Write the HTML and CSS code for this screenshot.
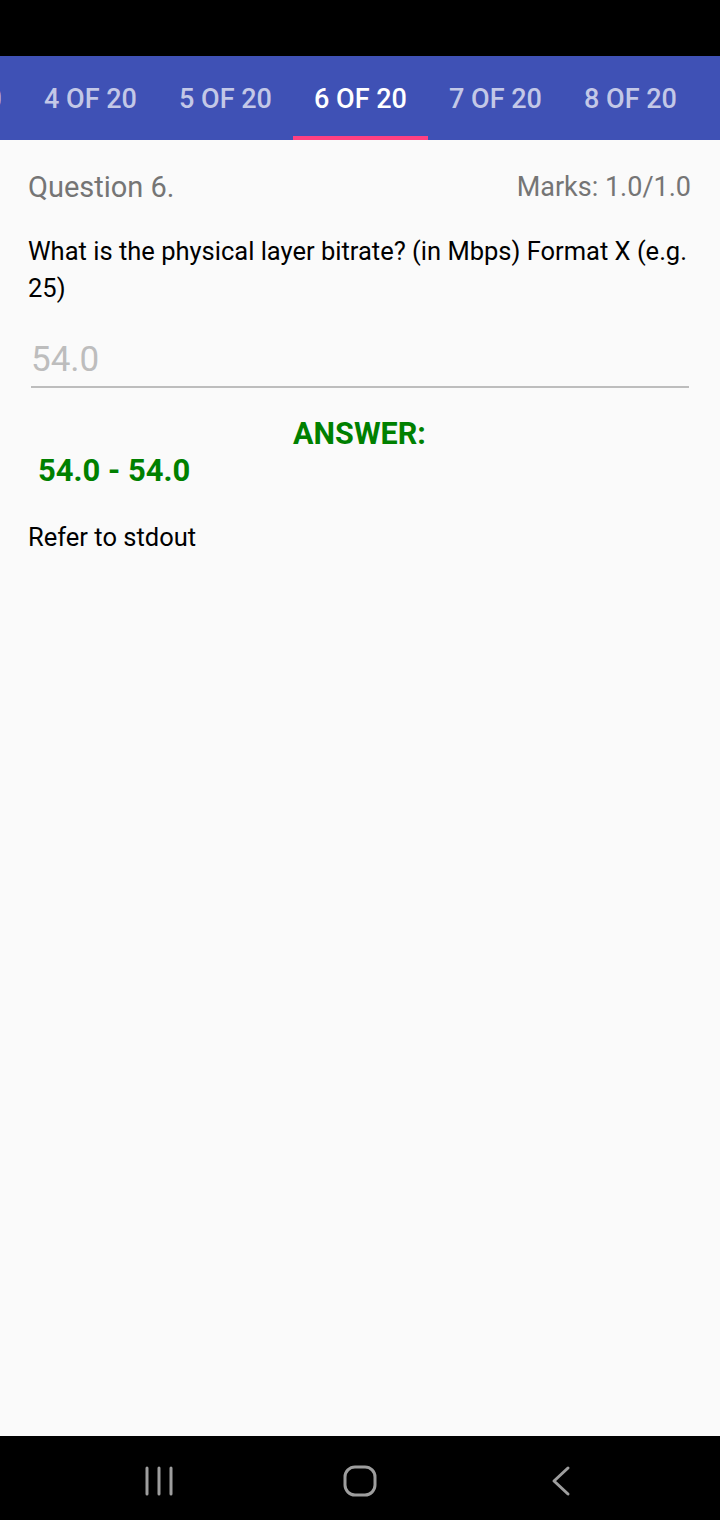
FILE: index.html
```html
<!DOCTYPE html>
<html>
<head>
<meta charset="utf-8">
<link rel="stylesheet" href="styles.css">
</head>
<body>
<div class="screen">
  <div class="status"></div>
  <div class="tabs">
    <div class="tab-strip">
      <div class="tab">3 OF 20</div>
      <div class="tab">4 OF 20</div>
      <div class="tab">5 OF 20</div>
      <div class="tab active">6 OF 20</div>
      <div class="tab">7 OF 20</div>
      <div class="tab">8 OF 20</div>
    </div>
  </div>
  <main class="content">
    <div class="head-row">
      <span class="qnum">Question 6.</span>
      <span class="marks">Marks: 1.0/1.0</span>
    </div>
    <p class="question">What is the physical layer bitrate? (in Mbps) Format X (e.g. 25)</p>
    <div class="field">54.0</div>
    <div class="answer-label">ANSWER:</div>
    <div class="answer-value">54.0 - 54.0</div>
    <p class="feedback">Refer to stdout</p>
  </main>
  <nav class="navbar">
    <svg class="nav-icon" width="40" height="40" viewBox="0 0 40 40"><g stroke="#9e9e9e" stroke-width="3" stroke-linecap="round"><line x1="8" y1="7" x2="8" y2="33"/><line x1="20" y1="7" x2="20" y2="33"/><line x1="32" y1="7" x2="32" y2="33"/></g></svg>
    <svg class="nav-icon" width="40" height="40" viewBox="0 0 40 40"><rect x="5" y="6" width="30" height="28" rx="10" fill="none" stroke="#9e9e9e" stroke-width="3"/></svg>
    <svg class="nav-icon" width="40" height="40" viewBox="0 0 40 40"><polyline points="27,7 13,20 27,33" fill="none" stroke="#9e9e9e" stroke-width="3" stroke-linecap="round" stroke-linejoin="round"/></svg>
  </nav>
</div>
</body>
</html>
```
FILE: styles.css
```css
* { box-sizing: border-box; }
html, body { margin: 0; padding: 0; }
body {
  width: 720px;
  height: 1520px;
  background: #fafafa;
  font-family: Roboto, "Liberation Sans", sans-serif;
  overflow: hidden;
}
.screen {
  display: flex;
  flex-direction: column;
  height: 1520px;
}
.status {
  height: 56px;
  background: #000;
  flex: none;
}
.tabs {
  height: 84px;
  background: #3f51b5;
  overflow: hidden;
  flex: none;
}
.tab-strip {
  display: flex;
  margin-left: -112px;
  height: 100%;
}
.tab {
  flex: none;
  width: 135px;
  height: 100%;
  display: flex;
  align-items: center;
  justify-content: center;
  color: rgba(255,255,255,0.7);
  font-size: 27px;
  font-weight: 500;
  border-bottom: 4px solid transparent;
  padding-top: 6px;
  white-space: nowrap;
}
.tab.active {
  color: #fff;
  border-bottom-color: #ff4081;
}
.content {
  flex: 1;
  padding: 27px 29px 0 28px;
}
.head-row {
  display: flex;
  justify-content: space-between;
  align-items: center;
  color: #757575;
  height: 40px;
}
.qnum { font-size: 29px; line-height: 40px; }
.marks { font-size: 27px; line-height: 40px; }
.question {
  margin: 26px 0 0;
  font-size: 25.5px;
  line-height: 37px;
  color: #000;
}
.field {
  margin: 31px 2px 0 3px;
  font-size: 35px;
  color: #bdbdbd;
  padding-bottom: 4px;
  border-bottom: 2px solid #bdbdbd;
  line-height: 44px;
}
.answer-label {
  margin-top: 28px;
  text-align: center;
  font-size: 30.5px;
  line-height: 36px;
  font-weight: 700;
  color: #008000;
}
.answer-value {
  margin-left: 10px;
  font-size: 31px;
  line-height: 38px;
  font-weight: 700;
  color: #008000;
}
.feedback {
  margin: 30px 0 0;
  font-size: 25.5px;
  line-height: 34px;
  color: #000;
}
.navbar {
  height: 84px;
  background: #000;
  flex: none;
  display: flex;
  justify-content: center;
  align-items: center;
  gap: 161px;
  padding-top: 6px;
}
.nav-icon { display: block; }
```
